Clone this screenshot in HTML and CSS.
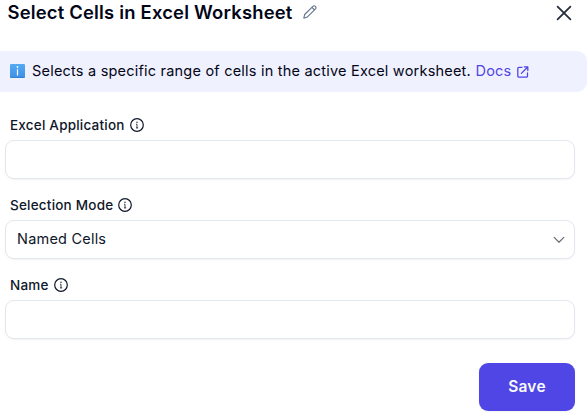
FILE: index.html
```html
<!DOCTYPE html>
<html lang="en">
<head>
<meta charset="utf-8">
<title>Select Cells in Excel Worksheet</title>
<link rel="stylesheet" href="styles.css">
</head>
<body>
<svg class="defs" aria-hidden="true">
  <symbol id="info" viewBox="0 0 14 14"><circle cx="7" cy="7" r="6.3" fill="none" stroke="currentColor" stroke-width="1.2"/><path d="M6.4 6.2H7v3.6M6.4 9.9h1.4" fill="none" stroke="currentColor" stroke-width=".8"/><circle cx="7" cy="4.3" r=".7" fill="currentColor"/></symbol>
</svg>
<main class="dialog">
  <header class="header">
    <h1 class="title">Select Cells in Excel Worksheet</h1>
    <svg class="pencil" viewBox="0 0 14 14"><path d="M.8 13.2l.9-3.7L9.9 1.3q1.3-1.1 2.5.1t.1 2.5l-8.3 8.2zM8.9 2.3l2.7 2.7"/></svg>
    <svg class="close" viewBox="0 0 16 16"><path d="M1.6 1.6l12.8 12.8M14.4 1.6L1.6 14.4"/></svg>
  </header>
  <section class="notice">
    <span class="badge"><svg viewBox="0 0 15 14"><circle cx="7.5" cy="3" r=".9"/><path d="M6.9 5.2h1.2v6.3H6.9z"/></svg></span>
    <span class="description">Selects a specific range of cells in the active Excel worksheet.</span>
    <a class="docs"><span class="docs-text">Docs</span><svg class="external" viewBox="0 0 12 12"><path d="M5 1.3H2Q.8 1.3.8 2.5v7.5q0 1.2 1.2 1.2h7.3q1.2 0 1.2-1.2V7M7.3.8h3.5v3.7M10.6 1L4.4 7.4"/></svg></a>
  </section>
  <form class="form">
    <div class="field">
      <label class="label"><span class="application">Excel Application</span><svg class="info"><use href="#info"/></svg></label>
      <div class="control"></div>
    </div>
    <div class="field">
      <label class="label"><span class="mode">Selection Mode</span><svg class="info"><use href="#info"/></svg></label>
      <div class="control"><span class="value">Named Cells</span><svg class="chevron" viewBox="0 0 12 8"><path d="M1.2 1.4L6 6.2l4.8-4.8"/></svg></div>
    </div>
    <div class="field">
      <label class="label"><span class="name">Name</span><svg class="info"><use href="#info"/></svg></label>
      <div class="control"></div>
    </div>
    <button class="save" type="button">Save</button>
  </form>
</main>
</body>
</html>
```
FILE: styles.css
```css
* { box-sizing: border-box; }
body { margin: 0; background: #fff; color: #0f172a; font-family: Inter, "Liberation Sans", sans-serif; letter-spacing: .21px; overflow: hidden; }
svg { display: block; flex: none; }
path { stroke-linecap: round; stroke-linejoin: round; }
.defs { width: 0; height: 0; position: absolute; }
.dialog { width: 587px; height: 417px; }
.header { height: 51px; display: flex; align-items: flex-start; padding: 0 15px 0 7.5px; }
.title { margin: 0; font-size: 18.4px; letter-spacing: .2px; line-height: 24px; font-weight: 600; white-space: nowrap; width: 285px; color: #020617; }
.pencil { width: 14px; height: 14px; margin: 5px 0 0 10.5px; fill: none; stroke: #64748b; stroke-width: 1.1; }
.close { width: 16px; height: 16px; margin: 5px 0 0 auto; fill: none; stroke: #272e3f; stroke-width: 1.8; }
.notice { height: 41px; display: flex; align-items: center; padding: 0 0 1px 10px; background: #f0f1ff; border-radius: 0 10px 10px 0; color: #020617; font-size: 14.5px; line-height: 20px; white-space: nowrap; }
.badge { width: 15px; height: 14px; border-radius: 1px; background: linear-gradient(#55aaf3, #3f91e7); border-bottom: 1px solid #3182d5; }
.badge svg { width: 15px; height: 14px; fill: #fff; }
.description { width: 438px; margin-left: 7px; }
.docs { display: flex; align-items: center; margin-left: 5.5px; color: #4f46e5; }
.docs-text { width: 35.5px; }
.external { width: 12px; height: 12px; margin: 2px 0 0 6px; fill: none; stroke: currentColor; stroke-width: 1.3; }
.form { display: flex; flex-direction: column; padding: 23px 12px 0 5px; }
.field { height: 80px; }
.label { height: 20px; display: flex; align-items: center; padding-left: 5px; font-size: 13.5px; line-height: 20px; font-weight: 500; white-space: nowrap; }
.application { width: 115.5px; }
.mode { width: 103.5px; }
.name { width: 39.5px; }
.info { width: 14px; height: 14px; margin-left: 4px; }
.control { height: 39px; margin-top: 5px; display: flex; align-items: center; justify-content: space-between; padding: 0 9px 0 11px; border: 1px solid #e2e8f0; border-radius: 9px; background: #fff; box-shadow: 0 1px 2px rgb(15 23 42 / 5%); font-size: 14.5px; }
.value { position: relative; top: -1px; line-height: 20px; }
.chevron { width: 12px; height: 8px; fill: none; stroke: #71717a; stroke-width: 1.3; }
.save { align-self: flex-end; width: 96px; height: 48px; margin-top: 8px; padding: 0 0 1px; border: 0; border-radius: 9px; background: #4f46e5; color: #f8fafc; font: 600 15.5px/24px Inter, "Liberation Sans", sans-serif; letter-spacing: .23px; box-shadow: 0 1px 2px rgb(15 23 42 / 5%); }
```
